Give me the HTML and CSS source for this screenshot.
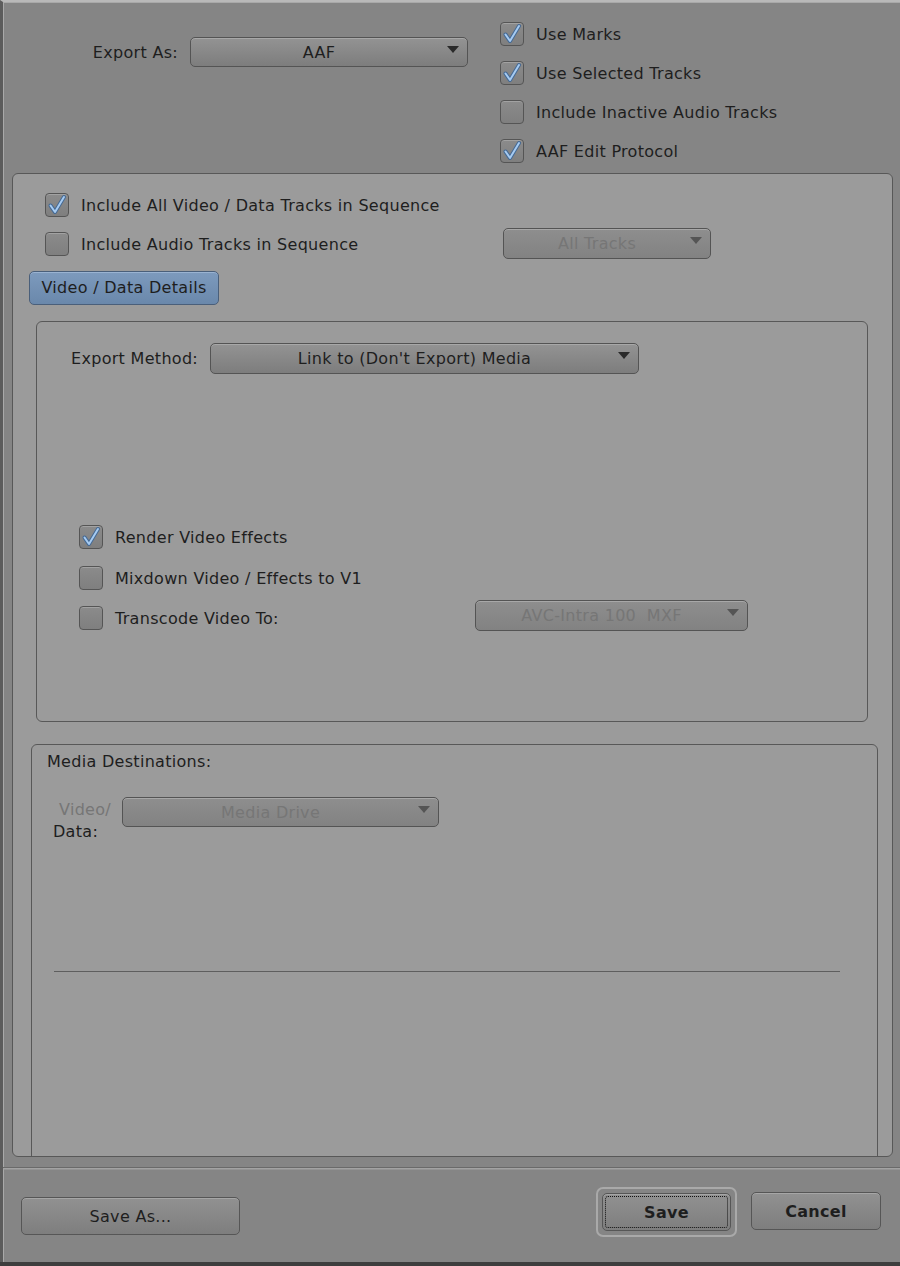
FILE: index.html
```html
<!DOCTYPE html>
<html lang="en">
<head>
    <meta charset="utf-8">
    <title>Export Settings</title>
    <link rel="stylesheet" href="styles.css">
</head>
<body>
<div class="dialog">
    <div class="header">
        <div class="export-as">
            <span class="field-label">Export As:</span>
            <div class="dropdown export-type"><span>AAF</span></div>
        </div>
        <ul class="options">
            <li class="check-row"><span class="checkbox checked"></span>Use Marks</li>
            <li class="check-row"><span class="checkbox checked"></span>Use Selected Tracks</li>
            <li class="check-row"><span class="checkbox"></span>Include Inactive Audio Tracks</li>
            <li class="check-row"><span class="checkbox checked"></span>AAF Edit Protocol</li>
        </ul>
    </div>

    <div class="panel">
        <div class="track-opts">
            <div class="check-row"><span class="checkbox checked"></span>Include All Video / Data Tracks in Sequence</div>
            <div class="split-row">
                <div class="check-row audio-check"><span class="checkbox"></span>Include Audio Tracks in Sequence</div>
                <div class="dropdown disabled all-tracks"><span>All Tracks</span></div>
            </div>
        </div>

        <button class="details-tab">Video / Data Details</button>

        <div class="group method-box">
            <div class="method-row">
                <span class="method-label">Export Method:</span>
                <div class="dropdown method-select"><span>Link to (Don't Export) Media</span></div>
            </div>
            <div class="render-opts">
                <div class="check-row tall"><span class="checkbox checked"></span>Render Video Effects</div>
                <div class="check-row tall"><span class="checkbox"></span>Mixdown Video / Effects to V1</div>
                <div class="split-row tall">
                    <div class="check-row transcode-check"><span class="checkbox"></span>Transcode Video To:</div>
                    <div class="dropdown disabled codec-select"><span>AVC-Intra 100  MXF</span></div>
                </div>
            </div>
        </div>

        <div class="group media-box">
            <div class="media-title">Media Destinations:</div>
            <div class="dest-row">
                <div class="dest-label"><span class="dim">Video/</span><span>Data:</span></div>
                <div class="dropdown disabled drive-select"><span>Media Drive</span></div>
            </div>
            <hr class="rule">
        </div>
    </div>

    <div class="footer">
        <button class="btn save-as">Save As...</button>
        <div class="footer-right">
            <div class="focus-ring"><button class="btn primary"><span class="dots">Save</span></button></div>
            <button class="btn primary cancel">Cancel</button>
        </div>
    </div>
</div>
</body>
</html>
```

FILE: styles.css
```css
/* --- base --- */
:root {
    --dark-bg: #858585;
    --panel-bg: #9b9b9b;
    --line: #585858;
    --text: #1e1e1e;
    --dim-text: #767676;
}

* { box-sizing: border-box; }

body {
    margin: 0;
    width: 900px;
    height: 1266px;
    overflow: hidden;
    background: #3e3e3e;
    font-family: "DejaVu Sans", "Liberation Sans", sans-serif;
    font-size: 16px;
    letter-spacing: 0.3px;
    color: var(--text);
}

ul { list-style: none; margin: 0; padding: 0; }
button { font-family: inherit; font-size: inherit; letter-spacing: inherit; color: var(--text); cursor: pointer; }

.dialog {
    height: 1262px;
    background: var(--dark-bg);
    border-top: 2px solid #b9b9b9;
    border-left: 3px solid #5c5c5c;
    box-shadow: inset 1px 1px 0 #a9a9a9;
    position: relative;
}

/* --- header --- */
.header { display: flex; height: 171px; padding-top: 12px; }
.export-as { display: flex; align-items: center; height: 30px; margin-top: 23px; margin-left: 79px; }
.field-label { width: 96px; text-align: right; margin-right: 12px; }
.options { margin-left: 32px; }

/* --- checkbox rows --- */
.check-row { display: flex; align-items: center; height: 39px; white-space: nowrap; padding-top: 1px; }
.check-row.tall { height: 41px; }
.checkbox {
    flex: none;
    width: 24px;
    height: 24px;
    margin-right: 12px;
    border: 1.5px solid #555;
    border-radius: 4px;
    background: linear-gradient(#8b8b8b, #7f7f7f);
    box-shadow: inset 0 1px 0 #a2a2a2;
    position: relative;
}
.checkbox.checked::after {
    content: "";
    position: absolute;
    left: 1px;
    top: 0;
    width: 20px;
    height: 21px;
    background: url("data:image/svg+xml;utf8,<svg xmlns='http://www.w3.org/2000/svg' viewBox='0 0 20 21'><path d='M3.5 11.5 L8 18 L17 3' fill='none' stroke='%23456a95' stroke-width='4' stroke-linecap='round' stroke-linejoin='round'/><path d='M3.5 11.5 L8 18 L17 3' fill='none' stroke='%23a6cbf2' stroke-width='2' stroke-linecap='round' stroke-linejoin='round'/></svg>") no-repeat;
}

/* --- dropdowns --- */
.dropdown {
    position: relative;
    height: 30px;
    border: 1.5px solid #545454;
    border-radius: 5px;
    background: linear-gradient(#939393, #7d7d7d);
    box-shadow: inset 0 1px 0 #a8a8a8;
    display: flex;
    align-items: center;
    justify-content: center;
    padding-right: 20px;
    white-space: pre;
}
.dropdown::after {
    content: "";
    position: absolute;
    right: 8px;
    top: 8px;
    border-left: 6px solid transparent;
    border-right: 6px solid transparent;
    border-top: 7px solid #2a2a2a;
}
.dropdown.disabled { color: var(--dim-text); background: linear-gradient(#8e8e8e, #828282); }
.dropdown.disabled::after { border-top-color: #555; }
.export-type { width: 278px; }

/* --- main panel --- */
.panel {
    margin-left: 9px;
    width: 881px;
    height: 984px;
    overflow: hidden;
    background: var(--panel-bg);
    border: 1.5px solid var(--line);
    border-radius: 6px;
    padding-top: 11px;
}
.track-opts { padding-left: 32px; }
.split-row { display: flex; align-items: center; }
.audio-check { width: 458px; }
.all-tracks { width: 208px; height: 31px; }

.details-tab {
    display: block;
    margin: 8px 0 0 16px;
    width: 190px;
    height: 34px;
    padding: 0 0 2px;
    border: 1.5px solid #4a5f7a;
    border-radius: 5px;
    background: linear-gradient(#7d9abd, #6a88ab);
    box-shadow: inset 0 1px 0 #9ab3d2;
}

.group { border: 1.5px solid var(--line); border-radius: 6px; }

.method-box { margin: 16px 0 0 23px; width: 832px; height: 401px; padding: 21px 0 0 34px; }
.method-row { display: flex; align-items: center; }
.method-label { width: 139px; }
.method-select { width: 429px; height: 31px; }
.render-opts { margin-top: 142px; padding-left: 8px; }
.transcode-check { width: 396px; }
.codec-select { width: 273px; height: 31px; margin-top: -5px; }

.media-box { margin: 22px 0 0 18px; width: 847px; height: 440px; padding: 7px 0 0 15px; }
.media-title { line-height: 20px; }
.dest-row { display: flex; margin-top: 25px; }
.dest-label { width: 75px; display: flex; flex-direction: column; line-height: 22px; margin-top: 2px; }
.dest-label .dim { color: var(--dim-text); padding-left: 12px; }
.dest-label span:last-child { padding-left: 6px; }
.drive-select { width: 317px; height: 30px; }
.rule { margin: 128px 0 0 7px; width: 786px; border: 0; border-top: 1.5px solid #5e5e5e; }

/* --- footer --- */
.footer {
    margin-top: 10px;
    border-top: 1.5px solid #6a6a6a;
    box-shadow: inset 0 1.5px 0 #a3a3a3;
    display: flex;
    justify-content: space-between;
    padding: 18px 19px 0 18px;
}
.footer-right { display: flex; align-items: flex-start; gap: 14px; }
.btn {
    height: 38px;
    border: 1.5px solid #565656;
    border-radius: 5px;
    background: linear-gradient(#919191, #7e7e7e);
    box-shadow: inset 0 1px 0 #a6a6a6;
}
.save-as { width: 219px; margin-top: 11px; }
.primary { font-weight: bold; }
.focus-ring { margin-top: 1px; padding: 4px; border: 2px solid #a9a9a9; border-radius: 7px; }
.focus-ring .btn { width: 129px; padding: 2px; display: flex; }
.dots { flex: 1; display: flex; align-items: center; justify-content: center; border: 1.5px dotted #111; border-radius: 3px; }
.cancel { width: 130px; margin-top: 6px; }
```
